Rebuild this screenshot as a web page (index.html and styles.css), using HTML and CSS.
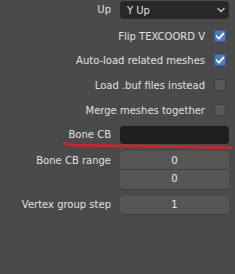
FILE: index.html
```html
<!DOCTYPE html>
<html>
<head>
<meta charset="utf-8">
<link rel="stylesheet" href="styles.css">
</head>
<body>
<div class="panel">
  <div class="row">
    <div class="label">Up</div>
    <div class="dropdown"><span>Y Up</span>
      <svg class="chev" width="8" height="6" viewBox="0 0 8 6"><path d="M1 1.5 L4 4.5 L7 1.5" fill="none" stroke="#c8c8c8" stroke-width="1.3" stroke-linecap="round" stroke-linejoin="round"/></svg>
    </div>
  </div>
  <div class="row check-row first-check">
    <span class="check-label">Flip TEXCOORD V</span>
    <span class="box on"><svg width="12" height="12" viewBox="0 0 12 12"><path d="M2.6 6.2 L5 8.6 L9.6 3.4" fill="none" stroke="#fff" stroke-width="1.6" stroke-linecap="round" stroke-linejoin="round"/></svg></span>
  </div>
  <div class="row check-row">
    <span class="check-label">Auto-load related meshes</span>
    <span class="box on"><svg width="12" height="12" viewBox="0 0 12 12"><path d="M2.6 6.2 L5 8.6 L9.6 3.4" fill="none" stroke="#fff" stroke-width="1.6" stroke-linecap="round" stroke-linejoin="round"/></svg></span>
  </div>
  <div class="row check-row">
    <span class="check-label">Load .buf files instead</span>
    <span class="box"></span>
  </div>
  <div class="row check-row">
    <span class="check-label">Merge meshes together</span>
    <span class="box"></span>
  </div>
  <div class="row">
    <div class="label">Bone CB</div>
    <div class="text-field"></div>
  </div>
  <div class="row tall">
    <div class="label top">Bone CB range</div>
    <div class="stack">
      <div class="num first">0</div>
      <div class="num last">0</div>
    </div>
  </div>
  <div class="row">
    <div class="label">Vertex group step</div>
    <div class="num single">1</div>
  </div>
  <svg class="scribble" width="235" height="274" viewBox="0 0 235 274"><path d="M64 142.8 C66 144.8 72 145.3 80 145.4 C120 145.8 180 146.4 231 147.8" fill="none" stroke="#d2232b" stroke-width="2.6" stroke-linecap="round"/></svg>
</div>
</body>
</html>
```
FILE: styles.css
```css
html, body {
  margin: 0;
  padding: 0;
  background: #4a4a4a;
}
body {
  width: 235px;
  height: 274px;
  overflow: hidden;
  font-family: "DejaVu Sans", "Liberation Sans", sans-serif;
  font-size: 10px;
  color: #e0e0e0;
}
.panel {
  position: relative;
  display: flex;
  flex-direction: column;
  gap: 7px;
  padding: 1px 6px 0 0;
}
.row {
  display: flex;
  align-items: center;
  height: 18px;
}
.row.first-check {
  margin-top: 1px;
  margin-bottom: -1px;
}
.row.tall {
  height: 38px;
  align-items: flex-start;
}
.label {
  width: 111px;
  text-align: right;
  padding-right: 9px;
  white-space: nowrap;
  line-height: 18px;
}
.label.top {
  line-height: 19px;
}
.dropdown {
  flex: 1;
  height: 18px;
  background: #282828;
  border-radius: 4px;
  display: flex;
  align-items: center;
  justify-content: space-between;
  padding: 0 4px 0 7px;
  box-sizing: border-box;
}
.check-row {
  justify-content: flex-end;
}
.check-label {
  white-space: nowrap;
  margin-right: 9px;
}
.box {
  width: 12px;
  height: 12px;
  border-radius: 3px;
  background: #585858;
  box-shadow: inset 0 0 0 1px #3e3e3e;
  margin-right: 3px;
  display: flex;
}
.box.on {
  background: #4f7bc0;
  box-shadow: inset 0 0 0 1px #3a5f99;
}
.text-field {
  flex: 1;
  height: 18px;
  background: #1e1e1e;
  border-radius: 4px;
}
.stack {
  flex: 1;
  display: flex;
  flex-direction: column;
}
.num {
  height: 19px;
  background: #565656;
  text-align: center;
  line-height: 19px;
  color: #e6e6e6;
  box-sizing: border-box;
}
.num.first {
  border-radius: 4px 4px 0 0;
  border-bottom: 1px solid #3f3f3f;
}
.num.last {
  border-radius: 0 0 4px 4px;
  line-height: 18px;
  box-shadow: 0 1px 0 #3c3c3c;
}
.num.single {
  flex: 1;
  height: 18px;
  line-height: 18px;
  border-radius: 4px;
  box-shadow: 0 1px 0 #3c3c3c;
}
.scribble {
  position: absolute;
  left: 0;
  top: 0;
  pointer-events: none;
}
```
